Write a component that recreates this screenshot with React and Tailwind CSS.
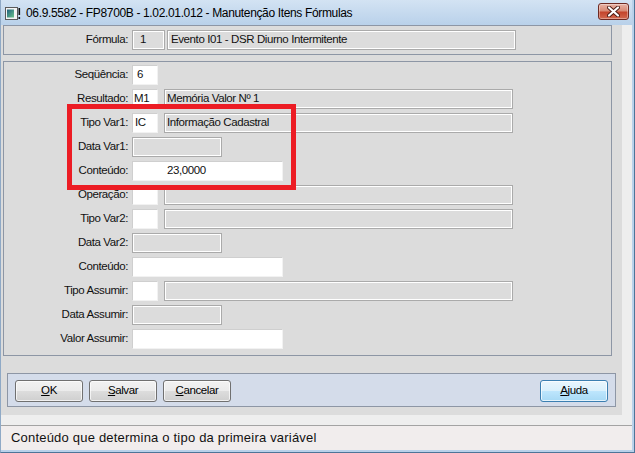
import React from "react";

// one row of the form: label column + boxes
const rows = [
  { label: "Seqüência:", kind: "code", code: "6", codePad: "pl-[4px]" },
  { label: "Resultado:", kind: "codeDesc", code: "M1", desc: "Memória Valor Nº 1" },
  { label: "Tipo Var1:", kind: "codeDesc", code: "IC", desc: "Informação Cadastral", codePad: "pl-[2px]" },
  { label: "Data Var1:", kind: "date" },
  { label: "Conteúdo:", kind: "value", value: "23,0000" },
  { label: "Operação:", kind: "codeDesc" },
  { label: "Tipo Var2:", kind: "codeDesc" },
  { label: "Data Var2:", kind: "date" },
  { label: "Conteúdo:", kind: "value" },
  { label: "Tipo Assumir:", kind: "codeDesc" },
  { label: "Data Assumir:", kind: "date" },
  { label: "Valor Assumir:", kind: "value" },
];

const whiteBox =
  "h-[20px] bg-white border border-[#cfcfcf] border-b-[#f2f2f2] border-r-[#f2f2f2] flex items-center whitespace-nowrap overflow-hidden";
const grayBox =
  "h-[20px] bg-[#dcdcdc] border border-[#aaaaaa] shadow-[inset_1px_1px_0_#ffffff,inset_-1px_-1px_0_#ffffff] flex items-center whitespace-nowrap overflow-hidden";

const Row = ({ row }) => (
  <div className="flex items-center h-[20px]">
    <div className="w-[124px] text-right whitespace-nowrap">{row.label}</div>
    <div className="ml-[4px] flex">
      {row.kind === "code" && (
        <div className={`${whiteBox} w-[26px] ${row.codePad || "pl-[1px]"}`}>{row.code}</div>
      )}
      {row.kind === "codeDesc" && (
        <>
          <div className={`${whiteBox} w-[26px] ${row.codePad || "pl-[1px]"}`}>{row.code}</div>
          <div className={`${grayBox} ml-[6px] w-[349px] pl-[2px]`}>{row.desc}</div>
        </>
      )}
      {row.kind === "date" && <div className={`${grayBox} w-[90px]`}></div>}
      {row.kind === "value" && (
        <div className={`${whiteBox} w-[151px] pl-[34px]`}>{row.value}</div>
      )}
    </div>
  </div>
);

const Button = ({ children, primary }) => (
  <button
    className={`w-[68px] h-[22px] rounded-[3px] border text-[11.5px] tracking-[-0.4px] text-black flex items-center justify-center shadow-[inset_0_0_0_1px_rgba(255,255,255,0.7)] ${
      primary
        ? "border-[#3c7fb1] bg-[linear-gradient(to_bottom,#eaf6fd_0%,#d9f0fc_50%,#bee6fd_50%,#a7d9f5_100%)]"
        : "border-[#707070] bg-[linear-gradient(to_bottom,#f2f2f2_0%,#ebebeb_50%,#dddddd_50%,#cfcfcf_100%)]"
    }`}
  >
    {children}
  </button>
);

export default function App() {
  return (
    <div className="relative w-[635px] h-[453px] bg-[#b9d1ea] border-l border-l-[#8fa9c6] border-r border-b border-[#4d7598] pr-[2px] pb-[2px] flex flex-col font-['Liberation_Sans',Arial,sans-serif] text-[#111] overflow-hidden">
      {/* title bar */}
      <div className="h-[25px] shrink-0 flex items-center bg-linear-to-b from-[#d3e3f3] to-[#b9d1ea]">
        <svg width="16" height="13" viewBox="0 0 16 13" className="ml-[4px] mt-[1px]">
          <defs>
            <linearGradient id="ic" x1="0" y1="0" x2="1" y2="1">
              <stop offset="0" stopColor="#1f5f7f" />
              <stop offset="1" stopColor="#6cc48a" />
            </linearGradient>
          </defs>
          <rect x="0.5" y="0.5" width="12" height="12" fill="#f4f4f4" stroke="#5a5a5a" />
          <rect x="2" y="2.5" width="7" height="8" fill="url(#ic)" />
          <rect x="13.5" y="1" width="1.6" height="7" fill="#111" />
          <rect x="13.5" y="10" width="1.6" height="2" fill="#111" />
        </svg>
        <div className="ml-[5px] text-[12px] tracking-[-0.35px] text-black">
          06.9.5582 - FP8700B - 1.02.01.012 - Manutenção Itens Fórmulas
        </div>
        <div className="flex-1" />
        <div className="mr-[3px] mb-[2px] w-[31px] h-[17px] rounded-[3px] border border-[#6e2a22] bg-[linear-gradient(to_bottom,#e8b2a4_0%,#d88b76_45%,#c4452c_55%,#d2694f_100%)] flex items-center justify-center shadow-[inset_0_0_0_1px_rgba(255,255,255,0.35)]">
          <svg width="13" height="11" viewBox="0 0 13 11">
            <path d="M2 1.5 L11 9.5 M11 1.5 L2 9.5" stroke="#4a1a12" strokeWidth="4" strokeLinecap="round" />
            <path d="M2 1.5 L11 9.5 M11 1.5 L2 9.5" stroke="#ffffff" strokeWidth="2.2" strokeLinecap="round" />
          </svg>
        </div>
      </div>

      {/* client area */}
      <div className="flex-1 bg-[#eeeeee] flex flex-col">
        <div className="w-[621px] h-[390px] bg-[#dcdcdc] flex flex-col text-[11.5px] tracking-[-0.4px]">
          {/* formula panel */}
          <div className="ml-[2px] w-[609px] h-[30px] border border-[#8d96a5] flex items-center">
            <div className="w-[124px] text-right">Fórmula:</div>
            <div className="ml-[4px] flex">
              <div className={`${grayBox} w-[33px] pl-[7px]`}>1</div>
              <div className={`${grayBox} ml-[2px] w-[349px] pl-[3px]`}>Evento I01 - DSR Diurno Intermitente</div>
            </div>
          </div>

          {/* fields panel */}
          <div className="ml-[2px] mt-[6px] w-[609px] h-[295px] border border-[#8d96a5] pt-[3px] flex flex-col gap-[4px]">
            {rows.map((row, i) => (
              <Row key={i} row={row} />
            ))}
          </div>

          {/* buttons panel */}
          <div className="ml-[6px] mt-[17px] w-[609px] h-[34px] border border-[#8d96a5] bg-[#d4dcea] pt-[6px] px-[7px] flex gap-[6px]">
            <Button>
              <span className="underline">O</span>K
            </Button>
            <Button>
              <span className="underline">S</span>alvar
            </Button>
            <Button>
              <span className="underline">C</span>ancelar
            </Button>
            <div className="flex-1" />
            <Button primary>
              <span className="underline">A</span>juda
            </Button>
          </div>
        </div>

        {/* status bar */}
        <div className="mt-[10px] flex-1 border-t border-[#a3a3a3] bg-[#f1eded] flex items-center pl-[10px] text-[13px] tracking-[0.2px] text-[#111]">
          Conteúdo que determina o tipo da primeira variável
        </div>
      </div>

      {/* red highlight annotation */}
      <div className="absolute left-[66px] top-[104px] w-[229px] h-[86px] border-[5px] border-[#ec1c24] pointer-events-none" />
    </div>
  );
}
